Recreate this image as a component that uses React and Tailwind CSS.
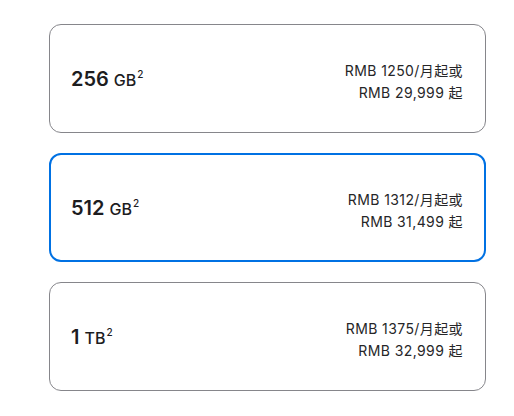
import React from 'react';

const options = [
  { size: '256', unit: 'GB', monthly: 'RMB 1250/月起或', full: 'RMB 29,999 起' },
  { size: '512', unit: 'GB', monthly: 'RMB 1312/月起或', full: 'RMB 31,499 起', selected: true },
  { size: '1', unit: 'TB', monthly: 'RMB 1375/月起或', full: 'RMB 32,999 起' },
];

function Option({ size, unit, monthly, full, selected }) {
  return (
    <div
      className={`h-[109px] rounded-[12px] flex items-center justify-between ${
        selected ? 'border-2 border-[#0071e3] pl-[20px] pr-[21px]' : 'border border-[#86868b] pl-[21px] pr-[22px]'
      }`}
    >
      <div className="text-[#1d1d1f] flex items-baseline gap-[5px]">
        <span className="text-[20px] font-semibold">{size}</span>
        <span className="text-[16px] font-medium">
          {unit}
          <sup className="text-[10px] font-medium -top-[0.8em] ml-[1px]">2</sup>
        </span>
      </div>
      <div className="text-right text-[14px] leading-[22px] tracking-[0.4px] text-[#262628] pt-[7px]">
        <div>{monthly}</div>
        <div>{full}</div>
      </div>
    </div>
  );
}

export default function App() {
  return (
    <div
      className="w-[514px] h-[416px] bg-white pt-[24px] pl-[49px]"
      style={{ fontFamily: 'Inter, "Noto Sans CJK SC", sans-serif' }}
    >
      <div className="w-[437px] flex flex-col gap-[20px]">
        {options.map((o) => (
          <Option key={o.size} {...o} />
        ))}
      </div>
    </div>
  );
}
